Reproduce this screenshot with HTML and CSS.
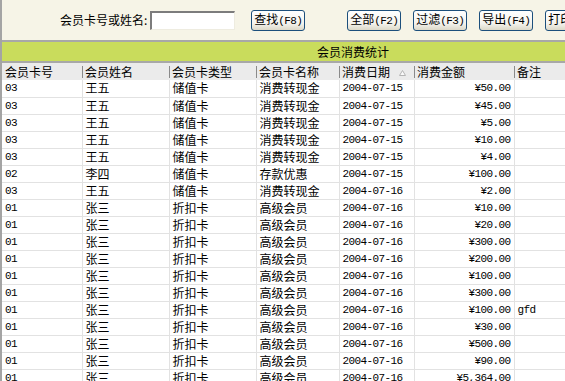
FILE: index.html
```html
<!DOCTYPE html>
<html lang="zh-CN">
<head>
    <meta charset="UTF-8">
    <title>会员消费统计</title>
    <link rel="stylesheet" href="styles.css">
</head>
<body>
    <div class="app">
        <div class="toolbar">
            <label class="search-label" for="keyword">会员卡号或姓名:</label>
            <input type="text" id="keyword" class="search-input">
            <button type="button" class="btn btn-find">查找<span class="key">(F8)</span></button>
            <button type="button" class="btn btn-all">全部<span class="key">(F2)</span></button>
            <button type="button" class="btn">过滤<span class="key">(F3)</span></button>
            <button type="button" class="btn">导出<span class="key">(F4)</span></button>
            <button type="button" class="btn">打印<span class="key">(F5)</span></button>
        </div>

        <div class="title-bar">会员消费统计</div>

        <table class="grid">
            <colgroup>
                <col class="c-no">
                <col class="c-name">
                <col class="c-type">
                <col class="c-card">
                <col class="c-date">
                <col class="c-amount">
                <col class="c-note">
            </colgroup>
            <thead>
                <tr>
                    <th>会员卡号</th>
                    <th>会员姓名</th>
                    <th>会员卡类型</th>
                    <th>会员卡名称</th>
                    <th class="sorted">消费日期<svg class="sort-icon" width="7" height="6" viewBox="0 0 7 6"><path d="M3.5 0.5 L6.5 5.5 L0.5 5.5 Z" fill="#fafafa" stroke="#b4b4b4" stroke-width="1"/></svg></th>
                    <th>消费金额</th>
                    <th>备注</th>
                </tr>
            </thead>
            <tbody id="rows"></tbody>
        </table>
    </div>

    <script>
        const records = [
            ["03", "王五", "储值卡", "消费转现金", "2004-07-15", "50.00", ""],
            ["03", "王五", "储值卡", "消费转现金", "2004-07-15", "45.00", ""],
            ["03", "王五", "储值卡", "消费转现金", "2004-07-15", "5.00", ""],
            ["03", "王五", "储值卡", "消费转现金", "2004-07-15", "10.00", ""],
            ["03", "王五", "储值卡", "消费转现金", "2004-07-15", "4.00", ""],
            ["02", "李四", "储值卡", "存款优惠", "2004-07-15", "100.00", ""],
            ["03", "王五", "储值卡", "消费转现金", "2004-07-16", "2.00", ""],
            ["01", "张三", "折扣卡", "高级会员", "2004-07-16", "10.00", ""],
            ["01", "张三", "折扣卡", "高级会员", "2004-07-16", "20.00", ""],
            ["01", "张三", "折扣卡", "高级会员", "2004-07-16", "300.00", ""],
            ["01", "张三", "折扣卡", "高级会员", "2004-07-16", "200.00", ""],
            ["01", "张三", "折扣卡", "高级会员", "2004-07-16", "100.00", ""],
            ["01", "张三", "折扣卡", "高级会员", "2004-07-16", "300.00", ""],
            ["01", "张三", "折扣卡", "高级会员", "2004-07-16", "100.00", "gfd"],
            ["01", "张三", "折扣卡", "高级会员", "2004-07-16", "30.00", ""],
            ["01", "张三", "折扣卡", "高级会员", "2004-07-16", "500.00", ""],
            ["01", "张三", "折扣卡", "高级会员", "2004-07-16", "90.00", ""],
            ["01", "张三", "折扣卡", "高级会员", "2004-07-16", "5,364.00", ""]
        ];

        const tbody = document.getElementById('rows');
        records.forEach(r => {
            let tr = document.createElement('tr');
            tr.innerHTML = `
                <td class="n">${r[0]}</td>
                <td>${r[1]}</td>
                <td>${r[2]}</td>
                <td>${r[3]}</td>
                <td class="n">${r[4]}</td>
                <td class="n amount">¥${r[5]}</td>
                <td class="n">${r[6]}</td>
            `;
            tbody.appendChild(tr);
        });
    </script>
</body>
</html>
```

FILE: styles.css
```css
html, body {
    margin: 0;
    overflow: hidden;
}

body {
    font-family: "Noto Sans CJK SC", sans-serif;
    font-size: 12px;
    color: #000;
    background-color: #fff;
}

.app {
    width: 702px;
    border-left: 2px solid #a4a4a4;
}

.toolbar {
    display: flex;
    align-items: center;
    height: 40px;
    padding-left: 58px;
    background-color: #f6f4e7;
    border-bottom: 2px solid #a8a8a8;
}

.search-label {
    line-height: 14px;
}

.search-input {
    box-sizing: border-box;
    width: 85px;
    height: 19px;
    margin: 0 0 0 3px;
    padding: 0;
    border-style: solid;
    border-width: 2px 1px 1px 2px;
    border-color: #7c7c7c #eeece0 #eeece0 #7c7c7c;
    background-color: #fff;
}

.btn {
    box-sizing: border-box;
    width: 54px;
    height: 21px;
    margin-left: 12px;
    padding: 0;
    font-family: "Noto Sans CJK SC", sans-serif;
    font-size: 12px;
    line-height: 14px;
    color: #000;
    border: 1px solid #1c4f7c;
    border-radius: 3px;
    background: linear-gradient(#ffffff, #f4f3ee 65%, #dcd8c8);
    white-space: nowrap;
    flex-shrink: 0;
}

.btn-find {
    margin-left: 16px;
}

.btn-all {
    margin-left: 42px;
}

.key {
    font-family: "Liberation Mono", monospace;
    font-size: 11px;
    letter-spacing: -0.6px;
}

.title-bar {
    height: 19px;
    line-height: 19px;
    text-align: center;
    background-color: #c9dc5c;
    border-bottom: 2px solid #a8a8a8;
}

.grid {
    width: 702px;
    table-layout: fixed;
    border-collapse: collapse;
}

.c-no { width: 80px; }
.c-name { width: 87px; }
.c-type { width: 87px; }
.c-card { width: 83px; }
.c-date { width: 75px; }
.c-amount { width: 100px; }

.grid th {
    height: 17px;
    padding: 0 3px;
    font-weight: normal;
    text-align: left;
    line-height: 14px;
    white-space: nowrap;
    overflow: hidden;
    background: #ebebeb linear-gradient(#8a8a8a, #8a8a8a) no-repeat 0 3px / 1px 12px;
}

.grid th:first-child {
    background-image: none;
}

.grid th.sorted {
    position: relative;
}

.sort-icon {
    position: absolute;
    right: 8px;
    top: 7px;
}

.grid td {
    box-sizing: border-box;
    height: 17px;
    padding: 0 3px;
    line-height: 14px;
    white-space: nowrap;
    overflow: hidden;
    border-right: 1px solid #e2e2e2;
    border-bottom: 1px solid #e2e2e2;
}

.grid td.n {
    font-family: "Liberation Mono", monospace;
    font-size: 11px;
    letter-spacing: -0.6px;
}

.grid td.amount {
    text-align: right;
}
```
